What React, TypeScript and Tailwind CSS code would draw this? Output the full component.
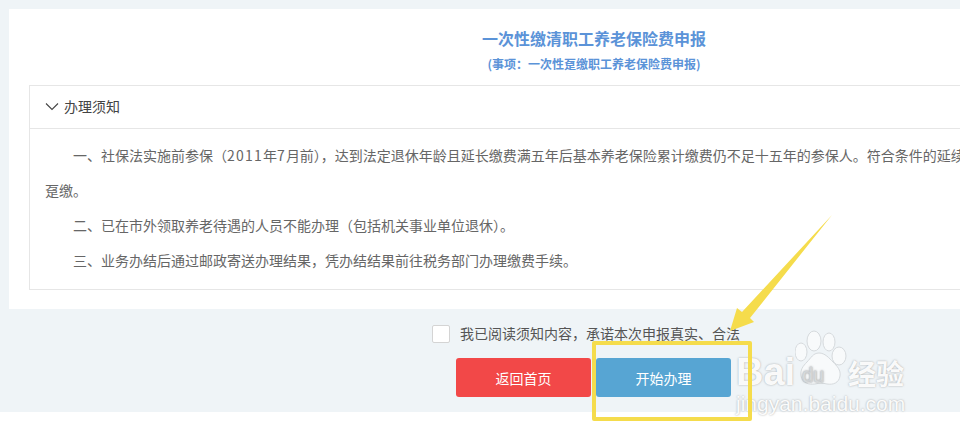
import React from "react";

const font = "font-['Noto_Sans_CJK_SC','Liberation_Sans',sans-serif]";
const latin = "font-['Liberation_Sans',sans-serif]";

// full-width punctuation, as in the original page
const LP = "\uFF08";
const RP = "\uFF09";
const COMMA = "\uFF0C";
const COLON = "\uFF1A";

const Watermark: React.FC = () => (
  <div className="absolute left-[736px] top-[330px] flex flex-col text-white/95 [text-shadow:0_0_2px_rgba(130,130,130,0.7)]">
    <div className="flex items-end h-[56px]">
      <span className={`text-[38px] leading-[40px] font-bold mb-[-6px] w-[59px] ${latin}`}>Bai</span>
      <svg width="53" height="56" viewBox="0 0 53 56">
        <g fill="#f8fafb" stroke="#d6dadd" strokeWidth="1">
          <ellipse cx="6" cy="22" rx="6" ry="9" />
          <ellipse cx="19" cy="11" rx="7" ry="10" />
          <ellipse cx="34" cy="12" rx="6" ry="9" />
          <ellipse cx="44" cy="26" rx="7" ry="9" />
          <path d="M24 23c-6 0-8 5-12 9-4 4-7 8-6 14 1 7 8 9 14 8 4-1 8-1 12 0 6 1 12-1 13-8 1-6-3-10-7-14-4-4-8-9-14-9z" />
        </g>
        <text x="7" y="52" fontSize="20" fontFamily="Liberation Sans" fill="#f4f6f7" stroke="#d0d4d7" strokeWidth="0.6">
          du
        </text>
      </svg>
      <span className={`text-[28px] leading-[36px] font-bold mb-[-5px] ${font}`}>经验</span>
    </div>
    <span className={`mt-[6px] text-[21px] leading-[24px] ${latin}`}>jingyan.baidu.com</span>
  </div>
);

export default function App() {
  return (
    <div className={`relative w-[960px] h-[433px] overflow-hidden bg-white ${font}`}>
      <div className="w-[1188px] bg-[#eff4f7] px-[9px] pt-[9px] pb-[15px]">
        <div className="bg-white px-5 pt-[17px] pb-[19px]">
          <h1 className="text-center text-base leading-6 font-bold text-[#5b93d8]">一次性缴清职工养老保险费申报</h1>
          <p className="mt-1 text-center text-xs leading-5 font-bold text-[#5b93d8]">
            {`(事项${COLON}一次性趸缴职工养老保险费申报)`}
          </p>
          <div className="mt-[11px] border border-[#e6e6e6]">
            <div className="flex items-center h-[43px] px-[15px] pb-[2px] border-b border-[#e6e6e6] text-sm text-[#444]">
              <svg width="14" height="14" viewBox="0 0 14 14" fill="none" stroke="#444" strokeWidth="1.1">
                <path d="M1 4.5l6 6 6-6" />
              </svg>
              <span className="ml-[5px]">办理须知</span>
            </div>
            <div className="px-[15px] pt-[9px] pb-[11px] text-sm leading-[35px] text-[#666]">
              <p className="indent-7">
                {`一、社保法实施前参保${LP}`}
                <span className="tracking-[1.2px]">2011</span>年<span className="tracking-[1.2px]">7</span>
                {`月前${RP}${COMMA}达到法定退休年龄且延长缴费满五年后基本养老保险累计缴费仍不足十五年的参保人。符合条件的延续`}
                <br />
                趸缴。
              </p>
              <p className="indent-7">{`二、已在市外领取养老待遇的人员不能办理${LP}包括机关事业单位退休${RP}。`}</p>
              <p className="indent-7">{`三、业务办结后通过邮政寄送办理结果${COMMA}凭办结结果前往税务部门办理缴费手续。`}</p>
            </div>
          </div>
        </div>
        <div className="mt-4 flex items-center justify-center h-[18px] pr-[16px]">
          <span className="w-[18px] h-[18px] bg-white border border-[#d4d4d4] rounded-[2px]" />
          <span className="ml-[10px] mb-[2px] text-sm text-[#555]">{`我已阅读须知内容${COMMA}承诺本次申报真实、合法`}</span>
        </div>
        <div className="mt-[15px] flex justify-center gap-[5px] pr-[1px]">
          <button className="w-[135px] h-[39px] rounded-[3px] bg-[#f24848] text-white text-sm">返回首页</button>
          <button className="w-[135px] h-[39px] rounded-[3px] bg-[#57a5d3] text-white text-sm">开始办理</button>
        </div>
      </div>

      <Watermark />

      {/* screenshot annotations */}
      <div className="absolute left-[592px] top-[341px] w-[160px] h-[80px] border-[4px] border-[#f5dc4c] rounded-[2px]" />
      <svg className="absolute left-0 top-0" width="960" height="433" viewBox="0 0 960 433">
        <polygon points="832,215 750,318 754,322 730,331 737,308 742,312" fill="#f5dc4c" />
      </svg>
    </div>
  );
}
